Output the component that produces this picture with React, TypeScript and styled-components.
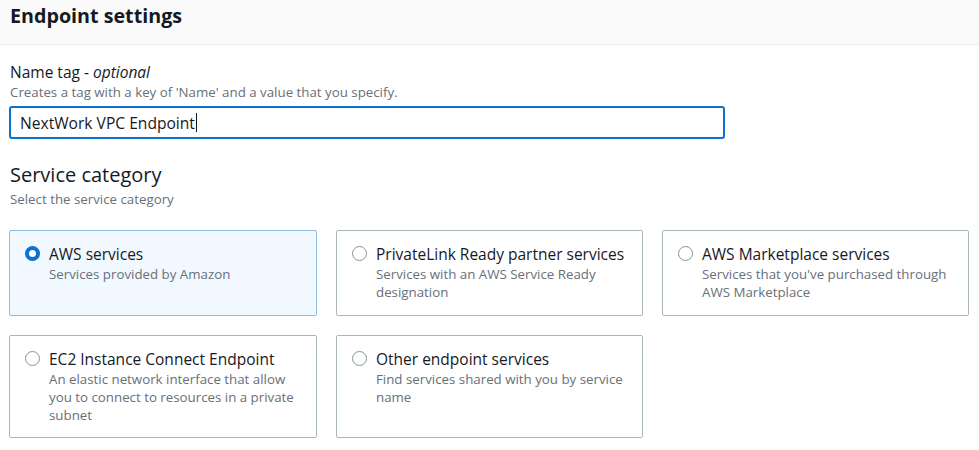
import React from "react";
import styled, { createGlobalStyle } from "styled-components";

const Global = createGlobalStyle`
  html, body { margin: 0; padding: 0; background: #ffffff; }
  body { font-family: "Open Sans", "Noto Sans", Arial, sans-serif; color: #16191f; }
  * { box-sizing: border-box; }
`;

const Page = styled.div`
  width: 979px;
  height: 450px;
  overflow: hidden;
  background: #ffffff;
`;

const Header = styled.div`
  height: 45px;
  background: #fafafa;
  border-bottom: 1px solid #eaeded;
  padding: 2px 10px 0;
`;

const Title = styled.h2`
  margin: 0;
  font-size: 19.7px;
  line-height: 28px;
  font-weight: 700;
  color: #16191f;
`;

const Body = styled.div`
  padding: 16px 10px 0 9px;
`;

const Label = styled.div`
  font-size: 15.5px;
  line-height: 22px;
  color: #16191f;
  padding-left: 1px;
  em { font-style: italic; }
`;

const Hint = styled.div<{ $gap?: number }>`
  margin-top: ${(p) => p.$gap ?? 0}px;
  font-size: 13.3px;
  line-height: 18px;
  color: #687078;
  padding-left: 1px;
`;

const Input = styled.div`
  margin-top: 5px;
  width: 716px;
  height: 33px;
  border: 2px solid #0a73d2;
  border-radius: 3px;
  padding: 0 9px;
  display: flex;
  align-items: center;
  font-size: 15.6px;
  color: #16191f;
`;

const Caret = styled.span`
  display: inline-block;
  width: 1px;
  height: 19px;
  background: #16191f;
  margin-left: 1px;
`;

const SectionTitle = styled.div`
  margin-top: 23px;
  font-size: 20px;
  line-height: 26px;
  color: #16191f;
  padding-left: 1px;
`;

const Grid = styled.div`
  margin-top: 22px;
  display: grid;
  grid-template-columns: 308px 307px 307px;
  column-gap: 19px;
  row-gap: 19px;
  grid-template-rows: 86px 103px;
`;

const Tile = styled.div<{ $selected?: boolean }>`
  border: 1px solid ${(p) => (p.$selected ? "#8bbde8" : "#aab7b8")};
  background: ${(p) => (p.$selected ? "#f1f8ff" : "#ffffff")};
  border-radius: 2px;
  padding: 12px 12px 0 15px;
  display: flex;
  gap: 9px;
  align-items: flex-start;
`;

const Radio = styled.span<{ $checked?: boolean }>`
  flex: none;
  width: 15px;
  height: 15px;
  margin-top: 3px;
  border-radius: 50%;
  border: ${(p) => (p.$checked ? "4px solid #0a73d2" : "1px solid #879596")};
  background: #ffffff;
`;

const TileText = styled.div`
  display: flex;
  flex-direction: column;
`;

const TileTitle = styled.div`
  font-size: 15.5px;
  line-height: 22px;
  color: #16191f;
`;

const TileDesc = styled.div`
  font-size: 13.3px;
  line-height: 18px;
  color: #687078;
`;

const tiles = [
  { title: "AWS services", desc: "Services provided by Amazon", selected: true },
  { title: "PrivateLink Ready partner services", desc: "Services with an AWS Service Ready designation" },
  { title: "AWS Marketplace services", desc: "Services that you've purchased through AWS Marketplace" },
  { title: "EC2 Instance Connect Endpoint", desc: "An elastic network interface that allow you to connect to resources in a private subnet" },
  { title: "Other endpoint services", desc: "Find services shared with you by service name" },
];

export default function App() {
  return (
    <Page>
      <Global />
      <Header>
        <Title>Endpoint settings</Title>
      </Header>
      <Body>
        <Label>
          Name tag - <em>optional</em>
        </Label>
        <Hint>Creates a tag with a key of 'Name' and a value that you specify.</Hint>
        <Input>
          NextWork VPC Endpoint
          <Caret />
        </Input>
        <SectionTitle>Service category</SectionTitle>
        <Hint $gap={2}>Select the service category</Hint>
        <Grid>
          {tiles.map((t) => (
            <Tile key={t.title} $selected={t.selected}>
              <Radio $checked={t.selected} />
              <TileText>
                <TileTitle>{t.title}</TileTitle>
                <TileDesc>{t.desc}</TileDesc>
              </TileText>
            </Tile>
          ))}
        </Grid>
      </Body>
    </Page>
  );
}
